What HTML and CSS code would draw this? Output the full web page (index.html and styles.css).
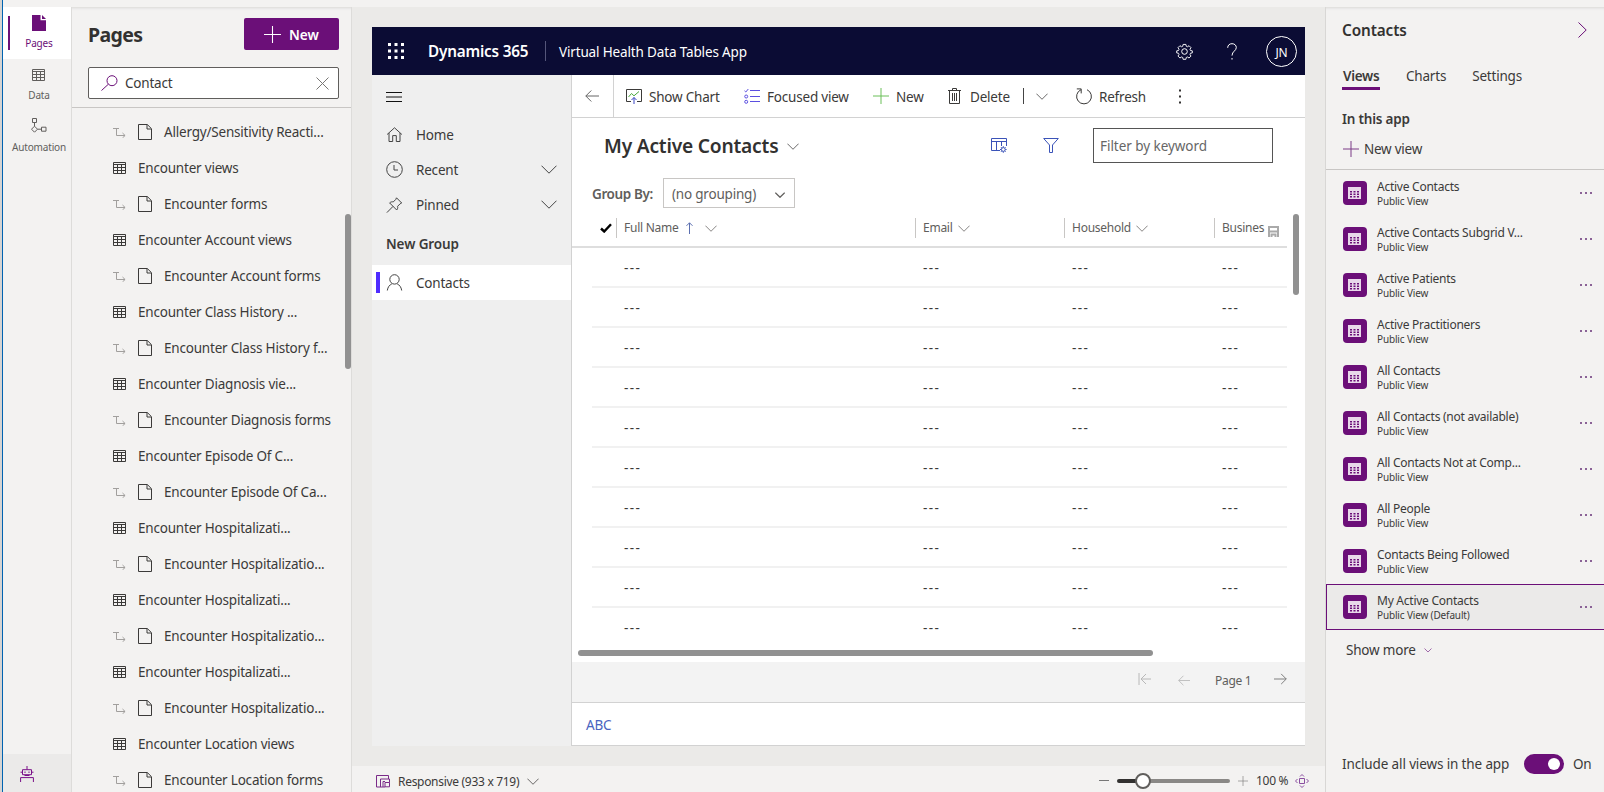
FILE: index.html
```html
<!DOCTYPE html>
<html lang="en">
<head>
  <meta charset="UTF-8">
  <title>Virtual Health Data Tables App</title>
  <link rel="stylesheet" href="styles.css">
</head>
<body>
  <svg class="sprite">
    <symbol id="i-table" viewBox="0 0 14 12"><path d="M.5.5h12v11H.5zM.5 2.5h12M.5 5.5h12M.5 8.5h12M4.500 2.500v9M8.500 2.500v9" /></symbol>
    <symbol id="i-tile" viewBox="0 0 13 12"><path fill-rule="evenodd" d="M0 0h13v12H0zM2 4h2v1.500H2zM5.500 4h2v1.500h-2zM9 4h2v1.500H9zM2 6.500h2V8H2zM5.500 6.500h2V8h-2zM9 6.500h2V8H9zM2 9h2v1.500H2zM5.500 9h2v1.500h-2zM9 9h2v1.500H9z" /></symbol>
    <symbol id="i-page" viewBox="0 0 14 16"><path d="M.5.5h8.800l4.200 4.200v10.800H.5zM9 .8v4.200h4.200" /></symbol>
    <symbol id="i-sub" viewBox="0 0 13 11"><path d="M0 1.500h6M3.500 1.500v7h8.500M9.500 6l2.600 2.500-2.600 2.400" /></symbol>
    <symbol id="i-down" viewBox="0 0 16 9"><path d="M.5.7L8 8.200 15.500.7" /></symbol>
    <symbol id="i-plus" viewBox="0 0 16 16"><path d="M8 0v16M0 8h16" /></symbol>
    <symbol id="i-left" viewBox="0 0 14 12"><path d="M.8 6H14M6.300.5L.8 6l5.500 5.500" /></symbol>
  </svg>

  <div class="edge"></div>
  <div class="shell">
    <div class="topstrip"></div>
    <div class="workspace">
      <nav class="rail">
        <div class="rail-item active">
          <svg width="14" height="16" viewBox="0 0 14 16"><path d="M0 0h8.500v5.200H14V16H0z" class="solid" /><path d="M10 0l4 4h-4z" class="solid" /></svg>
          <span>Pages</span>
        </div>
        <div class="rail-item">
          <svg width="14" height="12"><use href="#i-table" /></svg>
          <span>Data</span>
        </div>
        <div class="rail-item">
          <svg width="16" height="15" viewBox="0 0 16 15"><path d="M1.500.5h4v4h-4zM3.500 4.500V8M3.500 8.200l3 3-3 3-3-3zM6.500 11.200h4M10.500 9.200h4.500v4h-4.500z" /></svg>
          <span>Automation</span>
        </div>
        <div class="rail-foot">
          <svg width="14" height="16" viewBox="0 0 14 16"><path d="M7 0v3.500M2.500 3.700h9v5h-9zM.500 6.200h1.500M12 6.200h1.500M4.500 9.500h5M.600 16v-4.400h12.800V16M5 5.500v1.500M9 5.500v1.500" /></svg>
        </div>
      </nav>

      <aside class="pages">
        <div class="pages-head">
          <h1>Pages</h1>
          <button class="btn-new"><svg width="17" height="17"><use href="#i-plus" /></svg>New</button>
        </div>
        <div class="search">
          <svg class="glass" width="17" height="16" viewBox="0 0 17 16"><circle cx="11" cy="5.700" r="5" /><path d="M7.400 9.200L.5 15.500" /></svg>
          <span>Contact</span>
          <svg class="clear" width="13" height="13" viewBox="0 0 13 13"><path d="M.5.5l12 12M12.500.5l-12 12" /></svg>
        </div>
        <div class="page-list" id="pageList"></div>
        <div class="page-scroll"></div>
      </aside>

      <main class="canvas">
        <div class="app">
          <header class="app-bar">
            <svg class="waffle" width="16" height="16" viewBox="0 0 16 16"><path d="M0 0h3v3H0zM6.500 0h3v3h-3zM13 0h3v3h-3zM0 6.500h3v3H0zM6.500 6.500h3v3h-3zM13 6.500h3v3h-3zM0 13h3v3H0zM6.500 13h3v3h-3zM13 13h3v3h-3z" /></svg>
            <b>Dynamics 365</b>
            <span class="app-name">Virtual Health Data Tables App</span>
            <svg class="gear" width="17" height="17" viewBox="0 0 17 17"><circle cx="8.500" cy="8.500" r="2.800" /><path d="M7 1h3l.4 2 1.300.5 1.700-1.100 2.100 2.100-1.100 1.700.5 1.300 2 .4v2.200l-2 .4-.5 1.300 1.100 1.700-2.100 2.100-1.700-1.100-1.300.5-.4 2H7l-.4-2-1.300-.5-1.700 1.100-2.100-2.100 1.100-1.700-.5-1.300-2-.4V7.900l2-.4.5-1.300-1.100-1.700 2.100-2.100 1.700 1.100L6.600 3z" transform="translate(.6 .5) scale(.93)" /></svg>
            <svg class="help" width="10" height="17" viewBox="0 0 10 17"><path d="M.7 4.800C.7 2.200 2.500.7 5 .7s4.300 1.500 4.300 3.900c0 3.300-4.300 3.700-4.300 8M5 15v1.600" /></svg>
            <span class="avatar">JN</span>
          </header>

          <div class="app-body">
            <nav class="sitemap">
              <svg class="burger" width="16" height="10" viewBox="0 0 16 10"><path d="M0 .5h16M0 5h16M0 9.500h16" /></svg>
              <div class="site-item">
                <svg width="16" height="15" viewBox="0 0 16 15"><path d="M.6 7.500L8 .8l7.400 6.700M2.500 6v8.500h3.700V8.600h3.600v5.900h3.700V6" /></svg>
                <span>Home</span>
              </div>
              <div class="site-item">
                <svg width="17" height="17" viewBox="0 0 17 17"><circle cx="8.500" cy="8.500" r="7.800" /><path d="M8 4v5h4" /></svg>
                <span>Recent</span>
                <svg class="chev" width="16" height="9"><use href="#i-down" /></svg>
              </div>
              <div class="site-item">
                <svg width="16" height="16" viewBox="0 0 16 16"><path d="M10 .8L15.200 6l-1.600.8-2.500 2.500c.4 1.500 0 2.600-.9 3.700L3.100 5.900c1-.9 2.300-1.300 3.700-1l2.500-2.500zM6.500 9.400L.4 15.600" /></svg>
                <span>Pinned</span>
                <svg class="chev" width="16" height="9"><use href="#i-down" /></svg>
              </div>
              <div class="site-group">New Group</div>
              <div class="site-item current">
                <svg width="16" height="17" viewBox="0 0 16 17"><circle cx="8" cy="5.400" r="4.700" /><path d="M.8 16.500c.5-3.500 2.300-5.600 4.500-6.600M15.200 16.500c-.5-3.500-2.300-5.600-4.500-6.600" /></svg>
                <span>Contacts</span>
              </div>
            </nav>

            <section class="view">
              <div class="commands">
                <div class="back"><svg width="14" height="12"><use href="#i-left" /></svg></div>
                <div class="cmd chart">
                  <svg width="16" height="15" viewBox="0 0 16 15"><path d="M5 12.500H.5V.5h15v12H11" /><path class="green" d="M2.500 8l3-3.500 2.500 2.300 5-4.300" /><path class="blue" d="M8 15V8.500M5.500 11L8 8.500l2.500 2.500" /></svg>
                  <span>Show Chart</span>
                </div>
                <div class="cmd focused">
                  <svg width="16" height="15" viewBox="0 0 16 15"><path class="violet" d="M6 1.500h10M6 7.500h10M6 12.500h10M.5 1.800L1.800 3l2.500-3" /><circle class="violet" cx="2.200" cy="7.500" r="1.500" /><circle class="violet" cx="2.200" cy="12.800" r="1.500" /></svg>
                  <span>Focused view</span>
                </div>
                <div class="cmd add">
                  <svg width="16" height="16"><use href="#i-plus" /></svg>
                  <span>New</span>
                </div>
                <div class="cmd delete">
                  <svg width="13" height="16" viewBox="0 0 13 16"><path d="M0 2.500h13M4.500 2.500V.5h4v2M1.500 2.500v13h10v-13M4.500 5v8M6.500 5v8M8.500 5v8" /></svg>
                  <span>Delete</span>
                </div>
                <div class="split"><svg width="12" height="7"><use href="#i-down" /></svg></div>
                <div class="cmd">
                  <svg width="16" height="17" viewBox="0 0 16 17"><path d="M5 1.700A7.400 7.400 0 1 0 11 1.700M.8.9h4.400v4.500" /></svg>
                  <span>Refresh</span>
                </div>
                <svg class="more-v" width="3" height="15" viewBox="0 0 3 15"><path d="M0 .5h2v2H0zM0 6.500h2v2H0zM0 12.500h2v2H0z" /></svg>
              </div>

              <div class="view-head">
                <h2>My Active Contacts</h2>
                <svg class="title-chev" width="12" height="7"><use href="#i-down" /></svg>
                <svg class="cols" width="16" height="15" viewBox="0 0 16 15"><path d="M15.500 8V.5H.5v12H9M.5 3.500h15M5.500 3.500v9M10.500 3.500V8" /><circle cx="12.300" cy="11.500" r="1.900" /><path d="M12.300 8.200v1.300M12.300 13.500v1.300M9 11.500h1.300M14.300 11.500h1.300M10 9.200l.9.900M13.700 12.900l.9.900M14.600 9.200l-.9.900M10.900 12.900l-.9.900" /></svg>
                <svg class="funnel" width="16" height="15" viewBox="0 0 16 15"><path d="M.7.500h14.600L9.500 7v7.500h-3V7z" /></svg>
                <div class="keyword">Filter by keyword</div>
              </div>
              <div class="group-by">
                <b>Group By:</b>
                <div class="group-select"><span>(no grouping)</span><svg width="10" height="6"><use href="#i-down" /></svg></div>
              </div>

              <div class="grid-wrap">
                <div class="grid-head">
                  <div class="th check"><svg width="12" height="10" viewBox="0 0 12 10"><path d="M1 5.500L4.200 8.500 11 1.200" /></svg></div>
                  <div class="th"><span>Full Name</span><svg class="sort" width="7" height="12" viewBox="0 0 7 12"><path d="M3.500 12V.8M.5 3.800l3-3 3 3" /></svg><svg class="gap" width="12" height="7"><use href="#i-down" /></svg></div>
                  <div class="th"><span>Email</span><svg width="12" height="7"><use href="#i-down" /></svg></div>
                  <div class="th"><span>Household</span><svg width="12" height="7"><use href="#i-down" /></svg></div>
                  <div class="th"><span>Busines</span></div>
                  <div class="save"><svg width="11" height="11" viewBox="0 0 11 11"><path d="M1 11V1h9v10M1 5.500h9M3.500 11V8.500h4V11" /></svg></div>
                </div>
                <div id="gridRows"></div>
                <div class="v-scroll"></div>
              </div>
              <div class="h-scroll"></div>
              <div class="pager">
                <svg class="dim" width="13" height="12" viewBox="0 0 13 12"><path d="M1 0v12M3 6h10M8 1L3 6l5 5" /></svg>
                <svg class="dim prev" width="12" height="11"><use href="#i-left" /></svg>
                <span>Page 1</span>
                <svg class="next" width="13" height="12"><use href="#i-left" /></svg>
              </div>
              <div class="jump">ABC</div>
            </section>
          </div>
        </div>

        <footer class="status">
          <svg class="device" width="14" height="13" viewBox="0 0 14 13"><path d="M9 12H.5V.5h12V4M4.500 12V4h9v3.500M9 12V7.500h4.500v4.300H9M7 12V6.500h2" /></svg>
          <span class="size">Responsive (933 x 719)</span>
          <svg class="size-chev" width="12" height="7"><use href="#i-down" /></svg>
          <svg class="minus" width="10" height="10" viewBox="0 0 10 10"><path d="M0 4.500h10" /></svg>
          <div class="slider"><div class="thumb"></div></div>
          <svg class="zoom-in" width="10" height="10"><use href="#i-plus" /></svg>
          <span class="zoom">100 %</span>
          <svg class="fit" width="14" height="14" viewBox="0 0 14 14"><path d="M4.500 4.500h5v5h-5zM5 2.500l2-2 2 2M5 11.500l2 2 2-2M2.500 5l-2 2 2 2M11.500 5l2 2-2 2" /></svg>
        </footer>
      </main>

      <aside class="props">
        <div class="props-head">
          <h3>Contacts</h3>
          <svg width="9" height="16" viewBox="0 0 9 16"><path d="M.5.500L8.200 8 .5 15.500" /></svg>
        </div>
        <div class="tabs">
          <span class="tab on">Views</span>
          <span class="tab">Charts</span>
          <span class="tab">Settings</span>
        </div>
        <div class="in-app">In this app</div>
        <div class="new-view"><svg width="16" height="16"><use href="#i-plus" /></svg>New view</div>
        <div class="view-list" id="viewList"></div>
        <div class="show-more">Show more<svg width="8" height="5" viewBox="0 0 8 5"><path d="M.5.5L4 4 7.500.5" /></svg></div>
        <div class="include">
          <span>Include all views in the app</span>
          <div class="toggle"></div>
          <span>On</span>
        </div>
      </aside>
    </div>
  </div>

  <script>
    const pages = [
      ['form', 'Allergy/Sensitivity Reacti...'],
      ['view', 'Encounter views'],
      ['form', 'Encounter forms'],
      ['view', 'Encounter Account views'],
      ['form', 'Encounter Account forms'],
      ['view', 'Encounter Class History ...'],
      ['form', 'Encounter Class History f...'],
      ['view', 'Encounter Diagnosis vie...'],
      ['form', 'Encounter Diagnosis forms'],
      ['view', 'Encounter Episode Of C...'],
      ['form', 'Encounter Episode Of Ca...'],
      ['view', 'Encounter Hospitalizati...'],
      ['form', 'Encounter Hospitalizatio...'],
      ['view', 'Encounter Hospitalizati...'],
      ['form', 'Encounter Hospitalizatio...'],
      ['view', 'Encounter Hospitalizati...'],
      ['form', 'Encounter Hospitalizatio...'],
      ['view', 'Encounter Location views'],
      ['form', 'Encounter Location forms']
    ];

    const views = [
      'Active Contacts', 'Active Contacts Subgrid V...', 'Active Patients',
      'Active Practitioners', 'All Contacts', 'All Contacts (not available)',
      'All Contacts Not at Comp...', 'All People', 'Contacts Being Followed',
      'My Active Contacts'
    ];

    document.getElementById('pageList').innerHTML = pages.map(([kind, label]) => kind === 'form'
      ? `<div class="page-row form"><svg class="sub" width="13" height="11"><use href="#i-sub" /></svg><svg width="14" height="16"><use href="#i-page" /></svg><span>${label}</span></div>`
      : `<div class="page-row"><svg width="14" height="12"><use href="#i-table" /></svg><span>${label}</span></div>`
    ).join('');

    document.getElementById('gridRows').innerHTML = Array.from({ length: 10 }, () =>
      '<div class="grid-row"><span></span><span>---</span><span>---</span><span>---</span><span>---</span></div>'
    ).join('');

    document.getElementById('viewList').innerHTML = views.map((name, i) => {
      const last = i === views.length - 1;
      return `
        <div class="view-row${last ? ' selected' : ''}">
          <div class="tile"><svg width="13" height="12"><use href="#i-tile" /></svg></div>
          <div class="view-text"><div>${name}</div><small>Public View${last ? ' (Default)' : ''}</small></div>
          <svg class="dots" width="12" height="2" viewBox="0 0 12 2"><path d="M0 0h2v2H0zM5 0h2v2H5zM10 0h2v2h-2z" /></svg>
        </div>`;
    }).join('');
  </script>
</body>
</html>
```

FILE: styles.css
```css
* { box-sizing: border-box; }
body { margin: 0; height: 792px; display: flex; overflow: hidden; background: #f3f2f1; color: #3b3a39; font-family: "Segoe UI", "Noto Sans", sans-serif; font-size: 13.5px; letter-spacing: -0.2px; line-height: 20px; }
h1, h2, h3 { margin: 0; font-weight: 600; color: #323130; }
span, b, small { white-space: nowrap; }
svg { fill: none; stroke: currentColor; flex: none; display: block; }
.sprite { position: absolute; width: 0; height: 0; }
.solid { fill: currentColor; stroke: none; }

.edge { width: 3px; background: #d5d4d3; border-right: 1px solid #0063b1; }
.shell { flex: 1; display: flex; flex-direction: column; min-width: 0; }
.topstrip { height: 7px; background: #f3f2f1; flex: none; }
.workspace { flex: 1; display: flex; min-height: 0; box-shadow: inset 0 3px 3px -2px #d8d7d6; }

/* left rail */
.rail { width: 69px; border-right: 1px solid #dddcda; display: flex; flex-direction: column; color: #605e5c; }
.rail-item { height: 52px; position: relative; display: flex; flex-direction: column; align-items: center; justify-content: flex-end; padding: 0 0 7px 4px; gap: 4px; font-size: 10px; letter-spacing: -0.15px; line-height: 17px; }
.rail-item svg { margin-bottom: 2px; }
.rail-item.active { background: #fff; color: #6b0f78; }
.rail-item.active svg { margin-bottom: 0; }
.rail-item.active::before { content: ""; position: absolute; left: 5px; top: 9px; width: 2px; height: 34px; background: #6b0f78; }
.rail-foot { margin-top: auto; height: 38px; background: #ebeae9; padding: 12px 0 0 17px; color: #7a0f88; }

/* pages panel */
.pages { width: 280px; border-right: 1px solid #dddcda; position: relative; overflow: hidden; }
.pages-head { display: flex; justify-content: space-between; align-items: center; padding: 11px 12px 0 16px; height: 43px; }
h1 { font-size: 19.5px; font-weight: 700; letter-spacing: -0.6px; padding-top: 2px; }
.btn-new { width: 95px; height: 32px; background: #6b0f78; color: #fff; border: none; border-radius: 2px; font: 600 13.7px "Segoe UI", "Noto Sans", sans-serif; display: flex; align-items: center; justify-content: center; gap: 8px; }
.search { margin: 17px 12px 0 16px; height: 32px; border: 1px solid #605e5c; border-radius: 2px; background: #fff; display: flex; align-items: center; padding: 0 9px 0 12px; }
.search span { flex: 1; margin-left: 7px; }
.glass { color: #6b0f78; }
.clear { color: #797775; }
.page-list { margin-top: 8px; border-top: 1px solid #c8c6c4; padding-top: 6px; }
.page-row { height: 36px; display: flex; align-items: center; padding-left: 41px; }
.page-row span { margin-left: 11px; }
.page-row.form span { margin-left: 12px; }
.page-row .sub { color: #a19f9d; margin-right: 12px; }
.page-scroll { position: absolute; right: 0; top: 207px; width: 6px; height: 155px; border-radius: 3px; background: #919191; }

/* canvas and app preview */
.canvas { flex: 1; background: #ebeae8; display: flex; flex-direction: column; min-width: 0; }
.app { width: 933px; height: 719px; margin: 20px 0 20px 20px; display: flex; flex-direction: column; background: #fff; flex: none; }
.app-bar { height: 48px; background: #0b0c34; color: #fff; display: flex; align-items: center; padding: 0 8px 0 16px; }
.waffle { fill: #fff; stroke: none; }
.app-bar b { font-size: 15.3px; font-weight: 600; margin-left: 24px; width: 118px; letter-spacing: -0.2px; height: 20px; border-right: 1px solid #55567a; }
.app-name { margin-left: 13px; flex: 1; padding-top: 1px; letter-spacing: -0.15px; }
.gear { margin-right: 34px; }
.help { margin-right: 29px; }
.avatar { width: 31px; height: 31px; border: 1px solid #fff; border-radius: 50%; text-align: center; line-height: 31px; font-size: 12px; }
.app-body { flex: 1; display: flex; min-height: 0; }
.sitemap { width: 200px; background: #efefef; border-right: 1px solid #d2d2d2; }
.burger { margin: 17px 0 15px 14px; color: #111; }
.site-item { height: 35px; display: flex; align-items: center; padding: 0 14px; }
.site-item > svg:first-child { width: 17px; color: #444; }
.site-item span { margin-left: 13px; flex: 1; }
.site-item .chev { color: #444; }
.site-group { height: 43px; padding: 12px 0 0 14px; font-weight: 600; letter-spacing: -0.1px; }
.site-item.current { background: #fff; position: relative; }
.site-item.current::before { content: ""; position: absolute; left: 4px; top: 7px; width: 4px; height: 21px; background: #4f2cff; }

.view { flex: 1; min-width: 0; display: flex; flex-direction: column; border-bottom: 1px solid #d2d2d2; }
.commands { height: 43px; border-bottom: 1px solid #d2d2d2; display: flex; align-items: center; flex: none; }
.back { width: 42px; height: 42px; border-right: 1px solid #d2d2d2; padding: 15px 0 0 13px; color: #666; }
.cmd { display: flex; align-items: center; margin-left: 12px; gap: 7px; flex: none; }
.cmd span { padding-top: 2px; }
.chart { width: 106px; }
.focused { width: 117px; }
.add { width: 63px; }
.add svg { color: #6bbf59; }
.delete { width: 63px; gap: 9px; }
.green { stroke: #4ba83c; }
.blue { stroke: #3b46c4; }
.violet { stroke: #5b4fe0; }
.split { width: 41px; height: 16px; border-left: 1px solid #444; padding: 5px 0 0 12px; margin-left: 12px; }
.more-v { fill: #323130; stroke: none; margin-left: 33px; }
.view-head { height: 60px; display: flex; align-items: center; padding: 0 32px 5px 32px; flex: none; }
h2 { font-size: 19.2px; letter-spacing: -0.2px; width: 175px; white-space: nowrap; }
.title-chev { margin: 2px auto 0 8px; }
.cols, .funnel { color: #3b53b8; }
.cols { margin-right: 36px; }
.funnel { margin-right: 34px; }
.keyword { width: 180px; height: 35px; border: 1px solid #555; padding: 7px 6px; color: #666; letter-spacing: -0.05px; }
.group-by { height: 30px; display: flex; align-items: center; padding-left: 20px; color: #605e5c; flex: none; }
.group-by b { font-weight: 600; width: 71px; letter-spacing: -0.4px; padding-top: 1px; }
.group-select { width: 132px; height: 30px; border: 1px solid #c8c6c4; display: flex; align-items: center; justify-content: space-between; padding: 1px 9px 0 8px; }
.group-select svg { margin-top: 3px; stroke-width: 2; }

.grid-wrap { position: relative; height: 440px; flex: none; }
.grid-head, .grid-row { display: grid; grid-template-columns: 24px 299px 149px 150px 47px 26px; }
.grid-head { height: 40px; padding: 10px 0 0 20px; border-bottom: 2px solid #dedede; width: 715px; font-size: 12px; letter-spacing: -0.25px; color: #605e5c; align-items: start; }
.th { height: 20px; display: flex; align-items: center; border-left: 1px solid #c8c6c4; padding-left: 7px; gap: 5px; }
.th.check { border: none; padding-left: 8px; color: #000; }
.check svg { stroke-width: 2.4; }
.sort { color: #5b6fb0; margin-left: 2px; }
.gap { margin-left: 7px; }
.save { padding: 8px 0 0 7px; color: #aaa; }
.save svg { stroke-width: 2; }
.grid-row { height: 40px; margin-left: 20px; width: 695px; border-bottom: 2px solid #f1f1f1; line-height: 41px; letter-spacing: 1.4px; }
.grid-row span { padding-left: 8px; height: 38px; }
.grid-row:last-child { border: none; }
.v-scroll { position: absolute; left: 721px; top: 6px; width: 6px; height: 81px; border-radius: 3px; background: #919191; }
.h-scroll { width: 575px; height: 6px; border-radius: 3px; background: #919191; margin: 2px 0 6px 6px; flex: none; }
.pager { height: 41px; background: #f3f3f3; border-bottom: 1px solid #d2d2d2; display: flex; align-items: center; justify-content: flex-end; padding: 0 18px 6px 0; font-size: 12px; flex: none; }
.pager span { margin: 4px 25px 0; width: 34px; color: #605e5c; letter-spacing: -0.3px; }
.dim { color: #b8b8b8; }
.prev { margin: 2px 0 0 27px; }
.next { transform: scaleX(-1); color: #777; }
.jump { padding: 12px 14px; color: #4a63c0; letter-spacing: -0.2px; }

.status { flex: 1; background: #f3f2f1; display: flex; align-items: center; padding: 4px 16px 0 24px; font-size: 12px; }
.device { color: #7a2a88; margin-right: 8px; }
.size { width: 121px; letter-spacing: -0.3px; padding-top: 1px; }
.size-chev { margin: 0 auto 0 8px; }
.minus, .zoom-in { color: #777; }
.minus { margin-right: 8px; }
.slider { width: 113px; height: 4px; border-radius: 2px; background: linear-gradient(to right, #323130 25px, #8a8886 25px); margin-right: 8px; position: relative; }
.thumb { position: absolute; left: 18px; top: -6px; width: 16px; height: 16px; border: 2px solid #605e5c; border-radius: 50%; background: #fff; }
.zoom { margin: 0 8px; width: 31px; letter-spacing: -0.3px; }
.fit { color: #8a4fa0; }

/* properties panel */
.props { width: 279px; border-left: 1px solid #d8d7d5; display: flex; flex-direction: column; }
.props-head { display: flex; justify-content: space-between; padding: 13px 17px 0 16px; height: 59px; }
h3 { font-size: 15.3px; letter-spacing: -0.1px; }
.props-head svg { margin-top: 2px; color: #6b0f78; }
.tabs { display: flex; gap: 26px; padding-left: 16px; height: 43px; }
.tab { height: 24px; }
.tab.on { font-weight: 600; border-bottom: 3px solid #6b0f78; width: 38px; padding-left: 1px; letter-spacing: -0.3px; }
.in-app { font-weight: 600; padding-left: 16px; }
.new-view { display: flex; gap: 5px; padding: 10px 0 0 17px; height: 40px; line-height: 21px; letter-spacing: -0.25px; }
.new-view svg { color: #7a3a86; margin-top: 2px; }
.view-list { border-top: 1px solid #c8c6c4; }
.view-row { height: 46px; display: flex; align-items: center; padding: 0 12px 0 16px; border: 1px solid transparent; border-right: none; }
.view-row.selected { background: #ebeae9; border-color: #6b0f78; }
.tile { width: 24px; height: 24px; border-radius: 4px; background: #6b0f78; color: #e8d8ea; padding: 6px 5px; }
.tile svg { fill: currentColor; stroke: none; }
.view-text { flex: 1; margin-left: 10px; font-size: 12px; line-height: 14px; letter-spacing: -0.25px; padding-top: 2px; }
.view-text small { display: block; font-size: 10px; line-height: 14px; letter-spacing: -0.15px; }
.dots { fill: #8a6296; stroke: none; }
.show-more { display: flex; align-items: center; gap: 8px; padding: 10px 0 0 20px; }
.show-more svg { color: #a06aaa; }
.include { margin-top: auto; height: 38px; display: flex; align-items: flex-start; padding: 0 0 0 16px; }
.include span:first-child { width: 182px; letter-spacing: -0.13px; }
.toggle { width: 40px; height: 20px; border-radius: 10px; background: #6b0f78; position: relative; margin-right: 9px; }
.toggle::after { content: ""; position: absolute; right: 4px; top: 4px; width: 12px; height: 12px; border-radius: 50%; background: #fff; }
```
